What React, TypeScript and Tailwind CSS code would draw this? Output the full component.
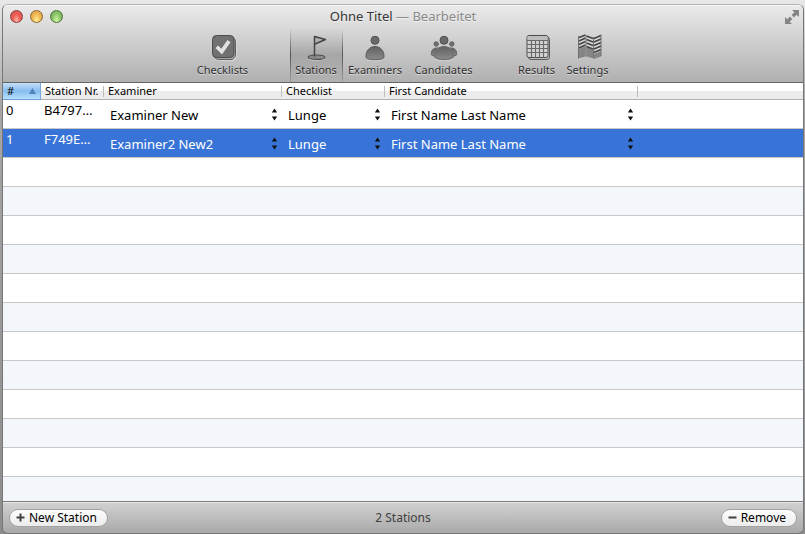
import { useState } from "react";
import type { ReactNode } from "react";

type Station = { id: number; nr: string; examiner: string; checklist: string; candidate: string };

const stations: Station[] = [
  { id: 0, nr: "B4797…", examiner: "Examiner New", checklist: "Lunge", candidate: "First Name Last Name" },
  { id: 1, nr: "F749E…", examiner: "Examiner2 New2", checklist: "Lunge", candidate: "First Name Last Name" },
];

const emptyRows = Array.from({ length: 12 }, (_, i) => i);

function IconDefs() {
  return (
    <svg width="0" height="0" className="absolute" aria-hidden="true">
      <defs>
        <linearGradient id="ink" x1="0" y1="0" x2="0" y2="1">
          <stop offset="0" stopColor="#626262" />
          <stop offset="1" stopColor="#8a8a8a" />
        </linearGradient>
      </defs>
    </svg>
  );
}

function ChecklistIcon() {
  return (
    <svg width="28" height="28" viewBox="0 0 28 28" aria-hidden="true">
      <rect x="5" y="3" width="22.500" height="23.500" rx="4.500" fill="#e4e4e4" />
      <rect x="5" y="3" width="21.500" height="22.500" rx="4.500" fill="#a8a8a8" stroke="#5c5c5c" />
      <rect x="3.500" y="1.500" width="21.500" height="22" rx="4" fill="#717171" stroke="#4c4c4c" />
      <path d="M6.500 14 9 11.500l3.300 3.300L18.500 6l3 2.200L13 20.500z" fill="#e2e2e2" />
    </svg>
  );
}

function FlagIcon() {
  return (
    <svg width="28" height="28" viewBox="0 0 28 28" aria-hidden="true">
      <ellipse cx="14.500" cy="24.300" rx="8.500" ry="2.500" fill="#cfcfcf" />
      <ellipse cx="14.500" cy="23.200" rx="8.300" ry="2.200" fill="#8c8c8c" stroke="#505050" strokeWidth="1.200" />
      <path d="M12.500 22.500V2.500L23.500 5.500 13 10" fill="#b2b2b2" stroke="#444" strokeWidth="1.500" strokeLinejoin="round" />
    </svg>
  );
}

function PersonIcon() {
  return (
    <svg width="28" height="28" viewBox="0 0 28 28" aria-hidden="true">
      <path d="M5 24.500C4 17.500 8 13 14 13s10 4.500 9 11.500c-1 3-17 3-18 0z" fill="#e2e2e2" />
      <path d="M5 23.500C4.500 17 8.500 12.500 14 12.500s9.500 4.500 9 11c-1 3-17 3-18 0z" fill="url(#ink)" stroke="#5c5c5c" />
      <circle cx="14" cy="6.500" r="5" fill="#cdcdcd" />
      <circle cx="14" cy="6.300" r="4" fill="#6a6a6a" stroke="#505050" />
    </svg>
  );
}

function PeopleIcon() {
  return (
    <svg width="28" height="28" viewBox="0 0 28 28" aria-hidden="true">
      <path d="M1.500 21C1 16.500 3 14 7 14h14c4 0 6 2.500 5.500 7-1.500 2-23.500 2-25 0z" fill="url(#ink)" stroke="#646464" />
      <path d="M4.500 24.500C4 17 8 12.500 14 12.500s10 4.500 9.500 12c-1 3-18 3-19 0z" fill="#dedede" />
      <path d="M4.500 23C4.500 16.500 8.500 12.500 14 12.500s9.500 4 9.500 10.500c-1 3.500-18 3.500-19 0z" fill="url(#ink)" stroke="#686868" />
      <circle cx="14" cy="6.300" r="5" fill="#cdcdcd" />
      <circle cx="14" cy="6.300" r="4" fill="#6a6a6a" stroke="#505050" />
      <circle cx="6.200" cy="10" r="2.200" fill="#747474" stroke="#5c5c5c" />
      <circle cx="21.800" cy="10" r="2.200" fill="#747474" stroke="#5c5c5c" />
    </svg>
  );
}

function GridIcon() {
  return (
    <svg width="28" height="28" viewBox="0 0 28 28" aria-hidden="true">
      <rect x="5.500" y="3" width="21" height="22.500" rx="2.500" fill="#c0c0c0" stroke="#5c5c5c" />
      <rect x="4" y="1.500" width="21" height="22" rx="2" fill="#d3d3d3" stroke="#4c4c4c" />
      <rect x="4.500" y="2" width="20" height="4" rx="1" fill="#bdbdbd" />
      <path d="M4 6.500h21M4 10.500h21M4 14.500h21M4 18.500h21M8.500 6.500v17M12.500 6.500v17M16.500 6.500v17M20.500 6.500v17" stroke="#6a6a6a" strokeWidth="1.200" />
    </svg>
  );
}

function MapIcon() {
  return (
    <svg width="28" height="28" viewBox="0 0 28 28" aria-hidden="true">
      <path d="M4.500 2 11.500 0v22.500l-7 2.500zM12 .5l7.500 2.500v22L12 22.500zM19.500 3l7.500-3v22l-7.500 3z" fill="#d6d6d6" />
      <path d="M4.500 15.500 11.500 12v10.500l-7 2zM12.500 13l6.500 3v8.500l-6.500-2zM20 20l7-3v5.500l-7 2.500z" fill="#858585" />
      <path d="M5 3.500 11.500 1M5 7l6.500-3M5 10.500l6.500-3M5 14l6.500-3M12.500 2l6.500 2.500M12.500 5.500l6.500 2.500M12.500 9l6.500 2.500M12.500 12.500l6.500 2.500M20 4.500 27 1.500M20 8l7-3M20 11.500l7-3M20 15l7-3M20 18.500l7-3" stroke="#444" strokeWidth="1.600" />
      <path d="M4.500 2v22.500M12 1v21.500M19.500 3v21.500M27 .5V22" stroke="#707070" />
    </svg>
  );
}

function ToolbarItem({ label, width, active, children }: { label: string; width: string; active?: boolean; children: ReactNode }) {
  return (
    <button
      type="button"
      aria-pressed={!!active}
      className={`relative flex flex-col items-center pt-1.5 text-[11px] leading-4 text-[#303030] ${width} ${
        active
          ? "bg-linear-to-b from-black/0 via-black/15 to-black/0 before:absolute before:inset-y-0 before:left-0 before:w-px before:bg-linear-to-b before:from-black/0 before:via-black/50 before:to-black/10 after:absolute after:inset-y-0 after:right-0 after:w-px after:bg-linear-to-b after:from-black/0 after:via-black/50 after:to-black/10"
          : ""
      }`}
    >
      {children}
      <span className="whitespace-nowrap [text-shadow:0_1px_0_#ffffff80]">{label}</span>
    </button>
  );
}

function PopUp({ label, value }: { label: string; value: string }) {
  return (
    <div className="relative flex h-7 items-center pt-0.5">
      <select aria-label={label} defaultValue={value} className="w-full appearance-none bg-transparent pl-1.5 text-[13px] leading-5 outline-none">
        <option>{value}</option>
      </select>
      <svg className="pointer-events-none absolute top-2 right-1" width="7" height="13" viewBox="0 0 7 13" aria-hidden="true">
        <path d="M3.500 0.500 6.200 4.500H.8zM3.500 12.500 6.200 8.500H.8z" fill="#111" />
      </svg>
    </div>
  );
}

function HeaderCell({ children }: { children?: ReactNode }) {
  return (
    <th scope="col" className="border-b border-[#b2b2b2] p-0 font-normal">
      <div className="flex h-4 items-center">
        <span className="flex-1 pl-1 text-left whitespace-nowrap">{children}</span>
        <span className="h-[11px] w-px bg-[#bdbdbd]" />
      </div>
    </th>
  );
}

export default function App() {
  const [selected, setSelected] = useState(1);
  return (
    <div className="h-screen bg-linear-to-b from-[#e8e8e8] via-[#a6a6a6] via-20% to-[#8c8c8c] pt-1 pr-px pl-0.5 font-['Noto_Sans','Open_Sans',sans-serif] text-[13px] text-black">
      <IconDefs />
      <div className="flex h-full flex-col overflow-hidden rounded-md border border-[#777] border-t-[#b4b4b4]">
        <header className="border-b border-[#646464] bg-linear-to-b from-[#ebebeb] to-[#b0b0b0] shadow-[inset_0_1px_0_#f6f6f6]">
          <div className="grid h-[23px] grid-cols-[1fr_auto_1fr] items-center px-[7px]">
            <div className="flex gap-[7px]">
              <button type="button" aria-label="Close" className="size-[13px] rounded-full border border-[#87403c] bg-radial-[at_50%_85%] from-[#ffb4a8] via-[#ee5750] to-[#c9605a]" />
              <button type="button" aria-label="Minimize" className="size-[13px] rounded-full border border-[#8e662c] bg-radial-[at_50%_85%] from-[#fff0a0] via-[#f4b74e] to-[#c99a58]" />
              <button type="button" aria-label="Zoom" className="size-[13px] rounded-full border border-[#4d7437] bg-radial-[at_50%_85%] from-[#d4f5a8] via-[#8bc868] to-[#6d9e58]" />
            </div>
            <h1 className="leading-4 pb-0.5 text-[#353535] [text-shadow:0_1px_0_#ffffff80]">
              Ohne Titel <span className="text-[#8a8a8a]">— Bearbeitet</span>
            </h1>
            <button type="button" aria-label="Full screen" className="-mr-1 justify-self-end">
              <svg width="16" height="16" viewBox="0 0 16 16" aria-hidden="true">
                <path d="M8 1h7v7l-2.300-2.300L10 8.400 7.600 6l2.700-2.700zM1 8l2.300 2.300L6 7.600 8.400 10l-2.700 2.700L8 15H1z" fill="#858585" />
              </svg>
            </button>
          </div>
          <nav className="flex h-[54px] justify-center pr-0.5">
            <ToolbarItem label="Checklists" width="w-16"><ChecklistIcon /></ToolbarItem>
            <div className="w-[35px]" />
            <ToolbarItem label="Stations" width="w-[53px]" active><FlagIcon /></ToolbarItem>
            <ToolbarItem label="Examiners" width="w-[65px]"><PersonIcon /></ToolbarItem>
            <ToolbarItem label="Candidates" width="w-[72px]"><PeopleIcon /></ToolbarItem>
            <div className="w-8" />
            <ToolbarItem label="Results" width="w-[50px]"><GridIcon /></ToolbarItem>
            <ToolbarItem label="Settings" width="w-[52px]"><MapIcon /></ToolbarItem>
          </nav>
        </header>

        <main className="min-h-0 flex-1 overflow-hidden bg-white">
          <table className="w-full table-fixed border-separate border-spacing-0">
            <colgroup>
              <col className="w-[38px]" />
              <col className="w-[63px]" />
              <col className="w-[178px]" />
              <col className="w-[103px]" />
              <col className="w-[253px]" />
              <col />
            </colgroup>
            <thead>
              <tr className="h-[17px] bg-linear-to-b from-white from-50% to-[#ececec] to-50% text-[11px] leading-4">
                <th scope="col" aria-sort="ascending" className="border-b border-[#6b9fd6] bg-linear-to-b from-[#c5dff7] via-[#86bdf0] to-[#b5e0fd] p-0 font-normal">
                  <div className="flex h-4 items-center justify-between border-r border-[#78a9e0] pr-1 pl-1">
                    #
                    <svg width="7" height="6" viewBox="0 0 7 6" aria-hidden="true"><path d="M3.500 0 7 6H0z" fill="#4d83bd" /></svg>
                  </div>
                </th>
                <HeaderCell>Station Nr.</HeaderCell>
                <HeaderCell>Examiner</HeaderCell>
                <HeaderCell>Checklist</HeaderCell>
                <HeaderCell>First Candidate</HeaderCell>
                <th className="border-b border-[#b2b2b2] p-0" />
              </tr>
            </thead>
            <tbody className="[&_td]:border-b [&_td]:border-[#c8c8c8]">
              {stations.map((s) => (
                <tr
                  key={s.id}
                  onClick={() => setSelected(s.id)}
                  aria-selected={selected === s.id}
                  className={`h-[29px] ${selected === s.id ? "bg-[#3874d8] text-white" : "bg-white"}`}
                >
                  <td className="p-0 pl-[3px] align-top leading-5">{s.id}</td>
                  <td className="p-0 pl-[3px] align-top leading-5 whitespace-nowrap">{s.nr}</td>
                  <td className="p-0"><PopUp label="Examiner" value={s.examiner} /></td>
                  <td className="p-0"><PopUp label="Checklist" value={s.checklist} /></td>
                  <td className="p-0"><PopUp label="First Candidate" value={s.candidate} /></td>
                  <td className="p-0" />
                </tr>
              ))}
              {emptyRows.map((i) => (
                <tr key={i} className="h-[29px] odd:bg-white even:bg-[#f3f6fb]">
                  <td colSpan={6} className="p-0" />
                </tr>
              ))}
            </tbody>
          </table>
        </main>

        <footer className="grid h-8 grid-cols-[1fr_auto_1fr] items-center border-t border-[#7c7c7c] bg-linear-to-b from-[#d2d2d2] to-[#a9a9a9] px-1.5 leading-4 shadow-[inset_0_1px_0_#e6e6e6]">
          <button type="button" className="flex h-[18px] items-center gap-1 justify-self-start rounded-full border border-[#a2a2a2] bg-linear-to-b from-[#fdfdfd] to-[#ececec] px-1.5 text-[12px]">
            <svg width="9" height="9" viewBox="0 0 9 9" aria-hidden="true"><path d="M4.500 0.500v8M.5 4.500h8" stroke="#404040" strokeWidth="2" /></svg>
            <span className="pr-1">New Station</span>
          </button>
          <span className="text-[12px] text-[#404040]">2 Stations</span>
          <button type="button" className="flex h-[18px] items-center gap-1 justify-self-end rounded-full border border-[#a2a2a2] bg-linear-to-b from-[#fdfdfd] to-[#ececec] px-1.5 text-[12px]">
            <svg width="9" height="9" viewBox="0 0 9 9" aria-hidden="true"><path d="M.5 4.500h8" stroke="#404040" strokeWidth="2" /></svg>
            <span className="pr-1">Remove</span>
          </button>
        </footer>
      </div>
    </div>
  );
}
